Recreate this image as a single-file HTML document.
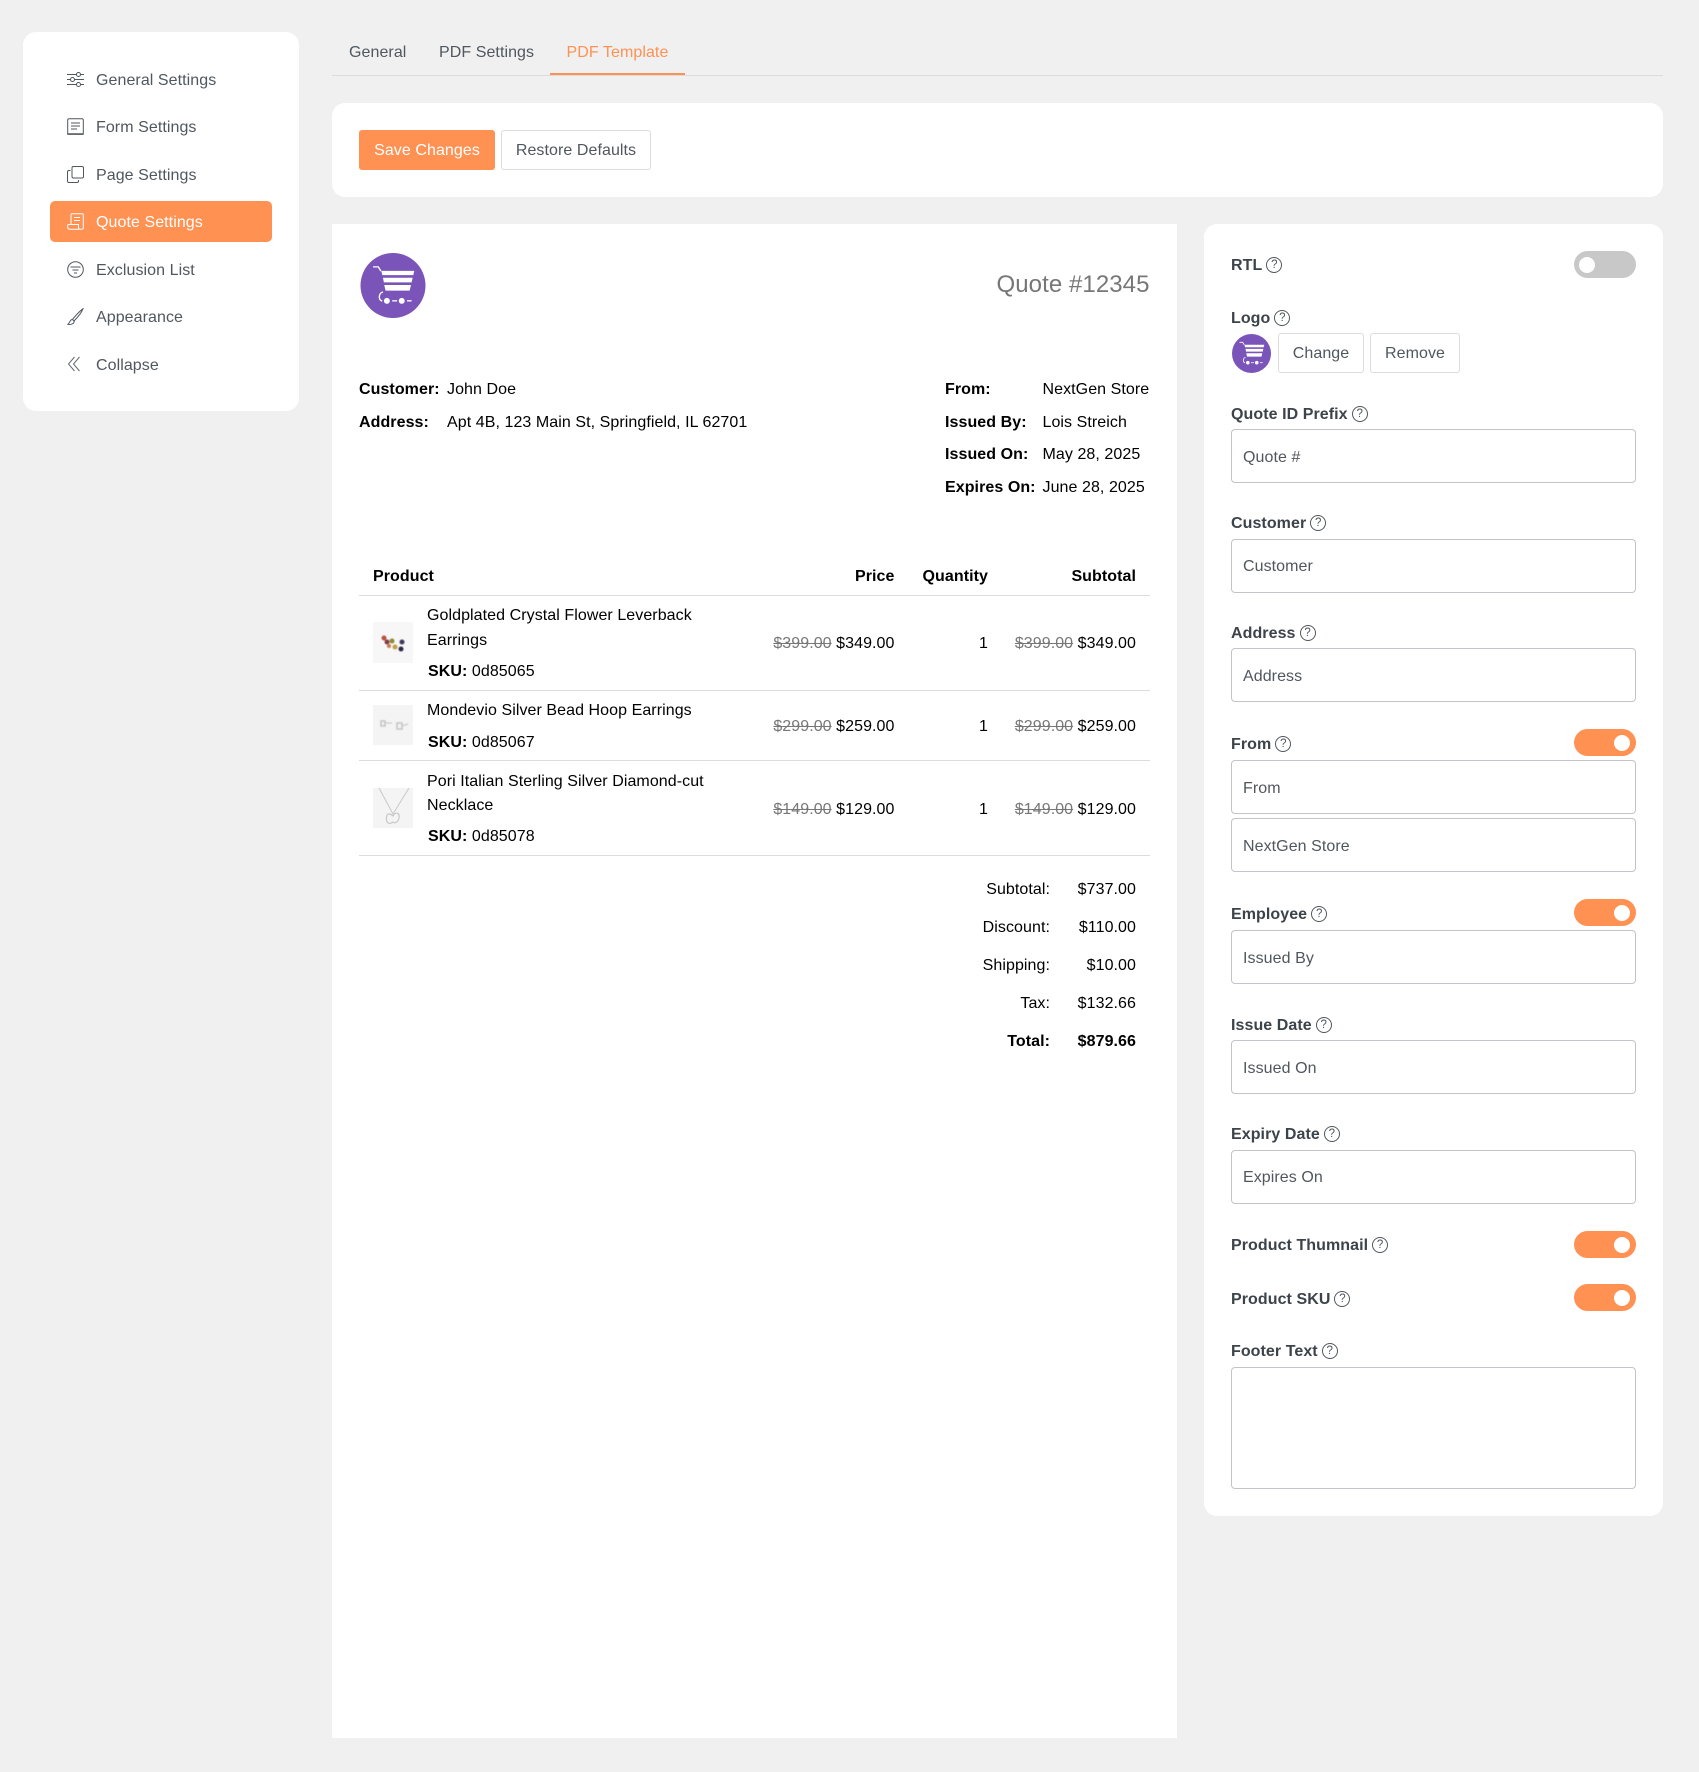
<!DOCTYPE html>
<html lang="en"><head><meta charset="utf-8"><title>PDF Template</title>
<style>
html,body{margin:0;padding:0;background:#f0f0f0}
#p{position:relative;width:1699px;height:1772px;overflow:hidden;background:#f0f0f0;font:16px/20px "Liberation Sans",Arial,sans-serif;letter-spacing:.07px;color:#000}
.a{position:absolute}
.t{position:absolute;white-space:nowrap;line-height:20px;margin-top:2px}
.w{background:#fff}
.n{left:96px;color:#50575e}
.i{position:absolute;left:67px;width:17px;height:17px;fill:none;stroke:#50575e;stroke-width:1}
b{font-weight:700}
s{color:#777}
.l{position:absolute;left:1231px;white-space:nowrap;line-height:20px;font-weight:700;color:#3c434a;margin-top:4px}
.q{display:inline-block;position:relative;top:1px;box-sizing:border-box;width:16px;height:16px;border:1.2px solid #50575e;border-radius:50%;font:400 11.5px/14px "Liberation Sans",Arial,sans-serif;text-align:center;color:#50575e;margin-left:4px;vertical-align:top;letter-spacing:0}
.f{position:absolute;left:1231px;width:405px;height:54px;box-sizing:border-box;border:1px solid #c3c4c7;border-radius:4px;background:#fff;padding-left:11px;line-height:55px;color:#50575e}
.g{position:absolute;left:1574px;width:62px;height:27px;border-radius:14px;background:#ff9152}
.g:after{content:"";position:absolute;left:40px;top:5.5px;width:16px;height:16px;border-radius:50%;background:#fff}
.g.o{background:#c8c8c8}.g.o:after{left:5px}
.hr{position:absolute;left:359px;width:791px;height:1px;background:#dcdcde}
.b{position:absolute;box-sizing:border-box;border:1px solid #dcdcde;border-radius:3px;background:#fff;text-align:center;color:#50575e}
</style></head><body><div id="p">

<svg width="0" height="0" style="position:absolute"><defs>
<symbol id="cart" viewBox="28 25 197 197">
<circle cx="126.5" cy="123.500" r="98.500" fill="#7b54b9"/>
<g fill="#fff">
<path d="M91 79H191L188 92H94Z"/><path d="M96 100H186L183 114H99Z"/><path d="M100 122H181L177 139H104Z"/>
<circle cx="108" cy="170" r="9"/><circle cx="153" cy="170" r="9"/>
<rect x="124" y="168" width="15" height="4"/><rect x="169" y="168" width="14" height="4"/>
</g>
<g fill="none" stroke="#fff" stroke-width="4">
<path d="M66 67H82L90 80"/><path d="M96 143C84 146 80 166 94 171"/>
</g>
</symbol>
</defs></svg>

<!-- Sidebar -->
<div class="a w" style="left:23px;top:32px;width:276px;height:379px;border-radius:13px"></div>
<div class="a" style="left:50px;top:201px;width:222px;height:41px;border-radius:5px;background:#ff9152"></div>

<svg class="i" style="top:71px" viewBox="0 0 17 17"><path d="M0 3.500H9.500M13.500 3.500H17M0 8.500H3.500M7.500 8.500H17M0 13.500H9.500M13.500 13.500H17"/><circle cx="11.500" cy="3.500" r="2"/><circle cx="5.500" cy="8.500" r="2"/><circle cx="11.500" cy="13.500" r="2"/></svg>
<div class="t n" style="top:69px">General Settings</div>
<svg class="i" style="top:118px" viewBox="0 0 17 17"><path d="M2 .7H15Q16.300.7 16.300 2V16.300H.7V2Q.7.7 2 .7Z"/><path d="M4 5H13M4 8H13M4 11H10"/><path d="M.7 16H16.300" stroke-width="1.500"/></svg>
<div class="t n" style="top:116px">Form Settings</div>
<svg class="i" style="top:166px" viewBox="0 0 17 17"><rect x="5" y=".5" width="11.500" height="11.500" rx="1.500"/><path d="M3.500 4.500H2Q.5 4.500.5 6V15Q.5 16.500 2 16.500H10Q11.500 16.500 11.500 15V14"/></svg>
<div class="t n" style="top:164px">Page Settings</div>
<svg class="i" style="top:213px;stroke:#fff" viewBox="0 0 17 17"><path d="M4 11V2Q4 .8 5.200.8H15Q16.300.8 16.300 2V14.500Q16.300 16.300 14.500 16.300H3Q.7 16.300.7 14V12.500Q.7 11.500 1.700 11.500H11.500V14.500Q11.500 16.300 13 16.300"/><path d="M7 4.500H13M7 7.500H13"/></svg>
<div class="t" style="top:211px;left:96px;color:#fff">Quote Settings</div>
<svg class="i" style="top:261px" viewBox="0 0 17 17"><circle cx="8.500" cy="8.500" r="7.800"/><path d="M3.500 6H13.500M5.500 9H11.500M7 12H10"/></svg>
<div class="t n" style="top:259px">Exclusion List</div>
<svg class="i" style="top:308px" viewBox="0 0 17 17"><path d="M16 .7C13 3 7.500 8.500 5.500 11.500L7 13C9.500 10.500 14.500 5 16 .7Z"/><path d="M5.300 11.500C2.800 11.500 3 15 .8 16.300C4 16.800 7.300 16 7.200 13"/></svg>
<div class="t n" style="top:306px">Appearance</div>
<svg class="i" style="top:356px;stroke:#646970" viewBox="0 0 17 17"><path d="M7.500 1L1.500 8L7.500 15M12.500 1L6.500 8L12.500 15"/></svg>
<div class="t n" style="top:354px">Collapse</div>

<!-- Tabs -->
<div class="t" style="left:349px;top:41px;color:#50575e">General</div>
<div class="t" style="left:439px;top:41px;color:#50575e">PDF Settings</div>
<div class="t" style="left:566.500px;top:41px;color:#ff9152">PDF Template</div>
<div class="a" style="left:332px;top:75px;width:1331px;height:1px;background:#dcdcde"></div>
<div class="a" style="left:550px;top:73px;width:135px;height:2px;background:#ff9152"></div>

<!-- Actions -->
<div class="a w" style="left:332px;top:103px;width:1331px;height:94px;border-radius:13px"></div>
<div class="a" style="left:359px;top:130px;width:136px;height:40px;line-height:41px;border-radius:3px;background:#ff9152;color:#fff;text-align:center">Save Changes</div>
<div class="b" style="left:501px;top:130px;width:150px;height:40px;line-height:39px">Restore Defaults</div>

<!-- PDF page -->
<div class="a w" style="left:332px;top:224px;width:845px;height:1514px"></div>
<svg class="a" style="left:360px;top:253px" width="66" height="65"><use href="#cart"/></svg>
<div class="t" style="right:549.500px;top:271px;font-size:24px;line-height:24px;color:#777">Quote #12345</div>

<div class="t" style="left:359px;top:378px"><b>Customer:</b></div><div class="t" style="left:447px;top:378px">John Doe</div>
<div class="t" style="left:359px;top:411px"><b>Address:</b></div><div class="t" style="left:447px;top:411px">Apt 4B, 123 Main St, Springfield, IL 62701</div>
<div class="t" style="left:945px;top:378px"><b>From:</b></div><div class="t" style="left:1042.500px;top:378px">NextGen Store</div>
<div class="t" style="left:945px;top:411px"><b>Issued By:</b></div><div class="t" style="left:1042.500px;top:411px">Lois Streich</div>
<div class="t" style="left:945px;top:443px"><b>Issued On:</b></div><div class="t" style="left:1042.500px;top:443px">May 28, 2025</div>
<div class="t" style="left:945px;top:476px"><b>Expires On:</b></div><div class="t" style="left:1042.500px;top:476px">June 28, 2025</div>

<!-- Table -->
<div class="t" style="left:373px;top:565px"><b>Product</b></div>
<div class="t" style="right:804.500px;top:565px"><b>Price</b></div>
<div class="t" style="right:711px;top:565px"><b>Quantity</b></div>
<div class="t" style="right:563px;top:565px"><b>Subtotal</b></div>
<div class="hr" style="top:595px"></div>

<svg class="a" style="left:373px;top:622px" width="40" height="41" viewBox="0 0 40 41"><rect width="40" height="41" fill="#f7f7f7"/><g style="filter:blur(.5px)"><circle cx="11" cy="16" r="2.500" fill="#b5533f"/><circle cx="14" cy="20" r="2.500" fill="#8a3a44"/><circle cx="19" cy="19" r="2.500" fill="#8b8a3a"/><circle cx="22" cy="25" r="2.500" fill="#c0a040"/><circle cx="29" cy="20" r="2.500" fill="#3d3a5a"/><circle cx="28" cy="27" r="2.500" fill="#2a2a48"/><circle cx="16" cy="24" r="2" fill="#c57a50"/></g></svg>
<div class="t" style="left:427px;top:604px">Goldplated Crystal Flower Leverback</div>
<div class="t" style="left:427px;top:629px">Earrings</div>
<div class="t" style="left:428px;top:660px"><b>SKU:</b> 0d85065</div>
<div class="t" style="right:804.500px;top:632px"><s>$399.00</s> $349.00</div>
<div class="t" style="right:711px;top:632px">1</div>
<div class="t" style="right:563px;top:632px"><s>$399.00</s> $349.00</div>
<div class="hr" style="top:690px"></div>

<svg class="a" style="left:373px;top:705px" width="40" height="40" viewBox="0 0 40 40"><rect width="40" height="40" fill="#f4f4f4"/><g style="filter:blur(.5px)" fill="#c4c4c4" stroke="#c4c4c4"><rect x="8" y="16" width="4" height="5" fill="none" stroke-width="1.500"/><path d="M12 18H19" fill="none"/><rect x="24" y="18" width="5" height="6" fill="none" stroke-width="1.500"/><path d="M29 21L35 19" fill="none"/></g></svg>
<div class="t" style="left:427px;top:699px">Mondevio Silver Bead Hoop Earrings</div>
<div class="t" style="left:428px;top:731px"><b>SKU:</b> 0d85067</div>
<div class="t" style="right:804.500px;top:715px"><s>$299.00</s> $259.00</div>
<div class="t" style="right:711px;top:715px">1</div>
<div class="t" style="right:563px;top:715px"><s>$299.00</s> $259.00</div>
<div class="hr" style="top:760px"></div>

<svg class="a" style="left:373px;top:788px" width="40" height="40" viewBox="0 0 40 40"><rect width="40" height="40" fill="#f4f4f4"/><g fill="none" stroke="#c8c8c8"><path d="M6 0L20 26L36 0"/><path d="M20 34C12 40 12 25 16 26C18 26 20 28 20 28C22 24 27 24 26 30C25 34 22 36 20 34Z" stroke-width="1.200"/></g></svg>
<div class="t" style="left:427px;top:770px">Pori Italian Sterling Silver Diamond-cut</div>
<div class="t" style="left:427px;top:794px">Necklace</div>
<div class="t" style="left:428px;top:825px"><b>SKU:</b> 0d85078</div>
<div class="t" style="right:804.500px;top:798px"><s>$149.00</s> $129.00</div>
<div class="t" style="right:711px;top:798px">1</div>
<div class="t" style="right:563px;top:798px"><s>$149.00</s> $129.00</div>
<div class="hr" style="top:855px"></div>

<div class="t" style="right:649px;top:878px">Subtotal:</div><div class="t" style="right:563px;top:878px">$737.00</div>
<div class="t" style="right:649px;top:916px">Discount:</div><div class="t" style="right:563px;top:916px">$110.00</div>
<div class="t" style="right:649px;top:954px">Shipping:</div><div class="t" style="right:563px;top:954px">$10.00</div>
<div class="t" style="right:649px;top:992px">Tax:</div><div class="t" style="right:563px;top:992px">$132.66</div>
<div class="t" style="right:649px;top:1030px"><b>Total:</b></div><div class="t" style="right:563px;top:1030px"><b>$879.66</b></div>

<!-- Right panel -->
<div class="a w" style="left:1204px;top:224px;width:459px;height:1292px;border-radius:13px"></div>

<div class="l" style="top:252px">RTL<span class="q">?</span></div>
<div class="g o" style="top:251px"></div>

<div class="l" style="top:305px">Logo<span class="q">?</span></div>
<svg class="a" style="left:1231.500px;top:334px" width="39" height="39"><use href="#cart"/></svg>
<div class="b" style="left:1278px;top:333px;width:86px;height:40px;line-height:39px">Change</div>
<div class="b" style="left:1370px;top:333px;width:90px;height:40px;line-height:39px">Remove</div>

<div class="l" style="top:401px">Quote ID Prefix<span class="q">?</span></div>
<div class="f" style="top:429px">Quote #</div>

<div class="l" style="top:510px">Customer<span class="q">?</span></div>
<div class="f" style="top:539px;line-height:53px">Customer</div>

<div class="l" style="top:620px">Address<span class="q">?</span></div>
<div class="f" style="top:648px">Address</div>

<div class="l" style="top:731px">From<span class="q">?</span></div>
<div class="g" style="top:729px"></div>
<div class="f" style="top:760px">From</div>
<div class="f" style="top:818px">NextGen Store</div>

<div class="l" style="top:901px">Employee<span class="q">?</span></div>
<div class="g" style="top:899px"></div>
<div class="f" style="top:930px">Issued By</div>

<div class="l" style="top:1012px">Issue Date<span class="q">?</span></div>
<div class="f" style="top:1040px">Issued On</div>

<div class="l" style="top:1121px">Expiry Date<span class="q">?</span></div>
<div class="f" style="top:1150px;line-height:53px">Expires On</div>

<div class="l" style="top:1232px">Product Thumnail<span class="q">?</span></div>
<div class="g" style="top:1231px"></div>

<div class="l" style="top:1286px">Product SKU<span class="q">?</span></div>
<div class="g" style="top:1284px"></div>

<div class="l" style="top:1338px">Footer Text<span class="q">?</span></div>
<div class="f" style="top:1367px;height:122px"></div>

</div></body></html>
